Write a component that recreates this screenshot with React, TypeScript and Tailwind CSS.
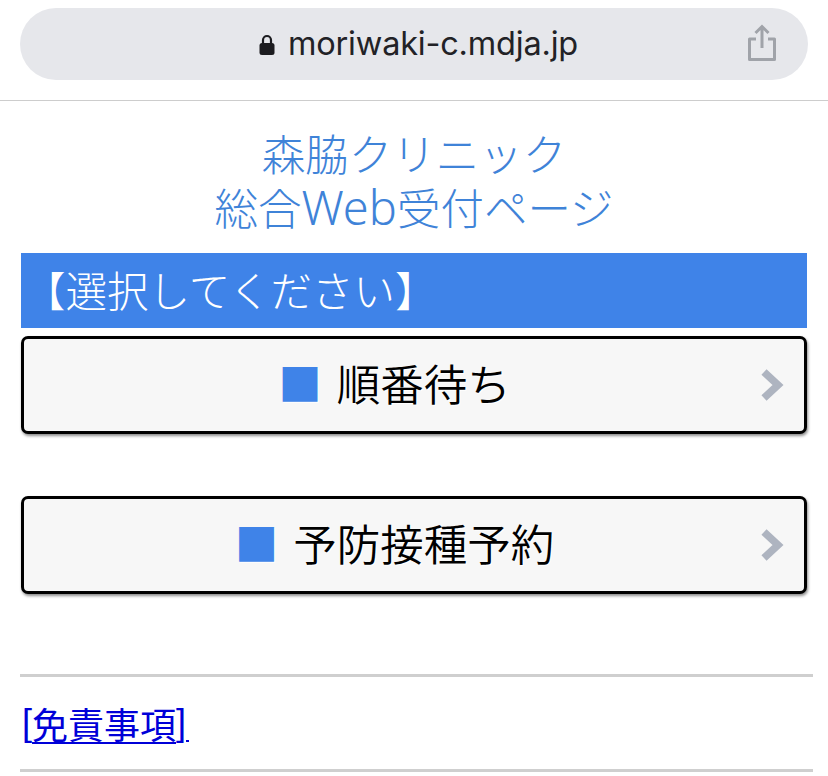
import React from "react";

const jp = "font-['Noto_Sans_CJK_JP','Liberation_Sans',sans-serif]";

function Chevron() {
  return (
    <svg width="24" height="34" viewBox="0 0 24 34" className="absolute right-[20px] top-1/2 -translate-y-1/2 blur-[0.6px]">
      <path d="M4 4 L18 17 L4 30" fill="none" stroke="#aeb4c0" strokeWidth="7.5" />
    </svg>
  );
}

function MenuButton({ label }: { label: string }) {
  return (
    <div className="relative flex h-[98px] items-center justify-center rounded-[7px] border-[3px] border-black bg-[#f7f7f7] pb-[4px] pr-[39px] shadow-[1px_2px_3px_rgba(0,0,0,0.45)]">
      <span className="text-[43.5px] font-[350] leading-none text-black [text-shadow:1px_1px_0_#fff]">
        <span className="text-[#3f83e8]">■</span>
        <span className="ml-[15px]">{label}</span>
      </span>
      <Chevron />
    </div>
  );
}

export default function App() {
  return (
    <div className={`${jp} h-[776px] w-[828px] overflow-hidden bg-white font-light`}>
      <div className="h-[101px] border-b border-[#cdcdcd] px-5 pt-2">
        <div className="relative flex h-[72px] items-center justify-center rounded-[36px] bg-[#e6e7eb]">
          <div className="flex items-center gap-[13px] pl-[9px] font-['Inter',sans-serif] text-[32.5px] font-normal leading-none tracking-[-0.2px] text-[#222226]">
            <svg width="16" height="21" viewBox="0 0 16 21">
              <path d="M4 10V6a4 4 0 0 1 8 0v4" fill="none" stroke="#1c1c20" strokeWidth="2.2" />
              <rect x="0.5" y="9" width="15" height="12" rx="2.5" fill="#1c1c20" />
            </svg>
            <span>moriwaki-c.mdja.jp</span>
          </div>
          <svg width="30" height="38" viewBox="0 0 30 38" className="absolute right-[31px] top-[16px]">
            <path d="M9 15H2.5v20.5h25V15H21" fill="none" stroke="#a0a3a9" strokeWidth="3" strokeLinejoin="round" />
            <path d="M15 24V3M8.5 9 15 2.5 21.5 9" fill="none" stroke="#a0a3a9" strokeWidth="3" />
          </svg>
        </div>
      </div>

      <div className="px-[21px] pt-[25px]">
        <div className="text-center text-[43.5px] text-[#3f83d8]">
          <div className="h-[54px] leading-[54px]">森脇クリニック</div>
          <div className="h-[54px] leading-[54px]">
            総合<span className="font-['Noto_Sans',sans-serif] text-[47px] font-light leading-none">Web</span>受付ページ
          </div>
        </div>
        <div className="mt-[19px] flex h-[75px] items-center bg-[#3f83e8] pb-[2px] pl-[3px] text-[41.5px] leading-none text-white">
          【選択してください】
        </div>
        <div className="mt-[8px] flex flex-col gap-[62px]">
          <MenuButton label="順番待ち" />
          <MenuButton label="予防接種予約" />
        </div>
      </div>

      <div className="ml-[20px] mr-[15px] mt-[80px]">
        <div className="h-[3px] bg-[#cfcfcf]" />
        <div className="flex h-[92px] items-center pl-[2px] text-[36px] leading-none text-[#0000d8]">
          <span className="font-['Liberation_Sans',sans-serif]">[</span>
          <a href="#" className="font-normal underline decoration-2 underline-offset-[3px]">免責事項</a>
          <span className="font-['Liberation_Sans',sans-serif]">]</span>
          <a href="#" className="inline-block h-[2px] w-[3px] translate-y-[18px] bg-[#0000d8]" aria-label="" />
        </div>
        <div className="h-[3px] bg-[#cfcfcf]" />
      </div>
    </div>
  );
}
